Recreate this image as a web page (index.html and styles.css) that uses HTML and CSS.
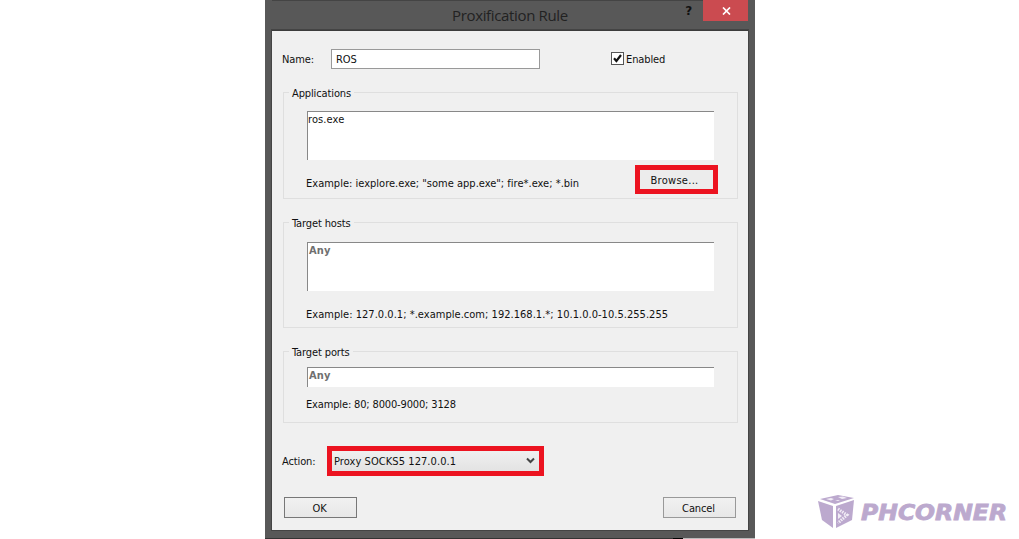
FILE: index.html
```
<!DOCTYPE html>
<html>
<head>
    <meta charset="utf-8">
    <title>Proxification Rule</title>
    <link rel="stylesheet" href="styles.css">
</head>
<body>
    <div class="window">
        <header class="titlebar">
            <h1>Proxification Rule</h1>
            <span class="help">?</span>
            <div class="close">
                <svg width="9" height="8" viewBox="0 0 9 8"><path d="M1 0.5L8 7.5M8 0.5L1 7.5" stroke="#fff" stroke-width="1.7"/></svg>
            </div>
        </header>
        <div class="content">
            <div class="row name-row">
                <label class="name-label">Name:</label>
                <div class="name-input">ROS</div>
                <div class="check">
                    <svg width="9" height="9" viewBox="0 0 9 9"><path d="M1 4.2L3.4 7L8 1" fill="none" stroke="#111" stroke-width="2.2"/></svg>
                </div>
                <label class="enabled">Enabled</label>
            </div>
            <div class="group apps">
                <div class="legend">Applications</div>
                <div class="field">ros.exe</div>
                <div class="example-row">
                    <p class="example">Example: iexplore.exe; "some app.exe"; fire*.exe; *.bin</p>
                    <div class="browse">Browse...</div>
                </div>
            </div>
            <div class="group hosts">
                <div class="legend">Target hosts</div>
                <div class="field any">Any</div>
                <p class="example">Example: 127.0.0.1; *.example.com; 192.168.1.*; 10.1.0.0-10.5.255.255</p>
            </div>
            <div class="group ports">
                <div class="legend">Target ports</div>
                <div class="field any">Any</div>
                <p class="example">Example: 80; 8000-9000; 3128</p>
            </div>
            <div class="row action-row">
                <label class="action-label">Action:</label>
                <div class="select">
                    <span>Proxy SOCKS5 127.0.0.1</span>
                    <svg width="9" height="7" viewBox="0 0 9 7"><path d="M1 1.5L4.5 5L8 1.5" fill="none" stroke="#444" stroke-width="2"/></svg>
                </div>
            </div>
            <div class="row buttons">
                <div class="btn ok">OK</div>
                <div class="btn cancel">Cancel</div>
            </div>
        </div>
        <div class="behind"></div>
    </div>
    <div class="logo">
        <svg width="192" height="38" viewBox="0 0 192 38">
            <g fill="#bca9ce">
                <path d="M2 5L20 1L36 4L17 10Z"/>
                <path d="M0 7L15 12V34L4 26Z"/>
                <path d="M18 12L36 6L34 26L18 34Z"/>
            </g>
            <path d="M8 5L13 4L16 5L13 6.500ZM20 3L25 2.500L29 4L24 5ZM17 6L22 6L20 7Z" fill="#f2edf6"/>
            <path d="M20 15L29 21L20 29" fill="none" stroke="#f2edf6" stroke-width="3" stroke-dasharray="1.500 1"/>
            <path d="M20 19L24 22L20 25Z" fill="#f2edf6"/>
            <text class="logo-text" x="43" y="26" textLength="146" lengthAdjust="spacingAndGlyphs">PHCORNER</text>
        </svg>
    </div>
</body>
</html>
```
FILE: styles.css
```
* {
    box-sizing: border-box;
}
body {
    margin: 0;
    height: 539px;
    overflow: hidden;
    background-color: #fff;
    font-family: "DejaVu Sans Condensed", "DejaVu Sans", sans-serif;
    font-stretch: condensed;
    font-size: 11px;
    line-height: 14px;
    letter-spacing: -0.12px;
    color: #111;
    display: flex;
}
p, h1 {
    margin: 0;
}
svg {
    display: block;
}
.window {
    width: 490px;
    height: 539px;
    margin-left: 265px;
    padding: 0 7px;
    background-color: #585858;
}
.titlebar {
    height: 30px;
    display: flex;
    align-items: flex-start;
    box-shadow: 0 1px #444 inset;
}
h1 {
    width: 117px;
    margin: 6px 0 0 180px;
    font: 15px/18px "Open Sans", sans-serif;
    letter-spacing: -0.35px;
    white-space: nowrap;
    color: #222;
}
.help {
    width: 10px;
    margin: 4px 0 0 117px;
    font: bold 12px/14px "DejaVu Sans", sans-serif;
    color: #111;
}
.close {
    width: 45px;
    height: 21px;
    margin-left: 8px;
    padding: 7px 0 0 19px;
    background-color: #cb4b50;
}
.content {
    width: 476px;
    height: 500px;
    padding: 18px 10px 0 11px;
    background-color: #f0f0f0;
    border-top: 1px solid #3c3c3c;
    outline: 1px solid #444;
    outline-offset: 0;
}
.row {
    display: flex;
}
.name-row {
    height: 20px;
    align-items: center;
}
.name-label {
    width: 48px;
    margin: 2px 0 0 -1px;
}
.name-input {
    width: 209px;
    height: 20px;
    margin-left: 1px;
    padding: 3px 4px;
    border: 1px solid #999;
    background-color: #fff;
}
.check {
    width: 13px;
    height: 13px;
    margin-left: 71px;
    margin-top: -2px;
    padding: 1px;
    border: 1px solid #555;
    background-color: #fff;
}
.enabled {
    margin: 1px 0 0 2px;
}
.group {
    width: 455px;
    padding: 0 23px;
    border: 1px solid #dfdfdf;
}
.legend {
    width: max-content;
    height: 14px;
    margin: -6px 0 0 -18px;
    padding: 0 3px;
    background-color: #f0f0f0;
}
.field {
    width: 407px;
    height: 49px;
    padding: 1px 0;
    border-top: 1px solid #888;
    border-left: 1px solid #888;
    background-color: #fff;
    letter-spacing: 0.1px;
}
.any {
    padding-left: 1px;
    font-weight: bold;
    color: #707070;
}
.example {
    margin: 17px 0 0 -1px;
    white-space: nowrap;
    letter-spacing: 0.01px;
}
.apps {
    height: 107px;
    margin-top: 23px;
}
.apps .field {
    margin-top: 10px;
}
.hosts .field {
    margin-top: 11px;
}
.example-row {
    display: flex;
    justify-content: space-between;
    margin-right: -4px;
}
.browse {
    width: 83px;
    height: 29px;
    margin-top: 5px;
    padding: 4px 4px 0 0;
    border: 5px solid #ec1320;
    background-color: #ececec;
    text-align: center;
    letter-spacing: 0.3px;
}
.hosts {
    height: 106px;
    margin-top: 23px;
}
.hosts .example {
    letter-spacing: 0.03px;
}
.ports {
    height: 72px;
    margin-top: 23px;
}
.ports .field {
    height: 20px;
    margin-top: 7px;
}
.ports .example {
    margin-top: 11px;
    letter-spacing: -0.15px;
}
.action-row {
    height: 30px;
    margin-top: 23px;
    align-items: center;
}
.action-label {
    width: 45px;
    margin: 1px 0 0 -1px;
}
.select {
    width: 217px;
    height: 30px;
    padding: 1px 4px 0 2px;
    border: 5px solid #ec1320;
    background: linear-gradient(#efefef, #e3e3e3);
    display: flex;
    justify-content: space-between;
    align-items: center;
    letter-spacing: 0.07px;
}
.select svg {
    margin-top: -2px;
}
.buttons {
    margin-top: 21px;
    padding: 0 2px 0 1px;
    justify-content: space-between;
}
.btn {
    width: 73px;
    height: 21px;
    padding: 4px 2px 0 0;
    border: 1px solid #777;
    background: linear-gradient(#f1f1f1, #e7e7e7);
    text-align: center;
}
.cancel {
    border-color: #999;
}
/* edge of the window underneath, showing along the bottom */
.behind {
    height: 1px;
    margin: 8px -7px 0;
    background: linear-gradient(90deg, #333 408px, #000 408px, #000 418px, #bbb 418px);
}
.logo {
    margin: 494px 0 0 63px;
}
.logo-text {
    font: italic bold 21px "DejaVu Sans", sans-serif;
    letter-spacing: 0;
    fill: #bca9ce;
    stroke: #bca9ce;
    stroke-width: 0.8px;
}
```
